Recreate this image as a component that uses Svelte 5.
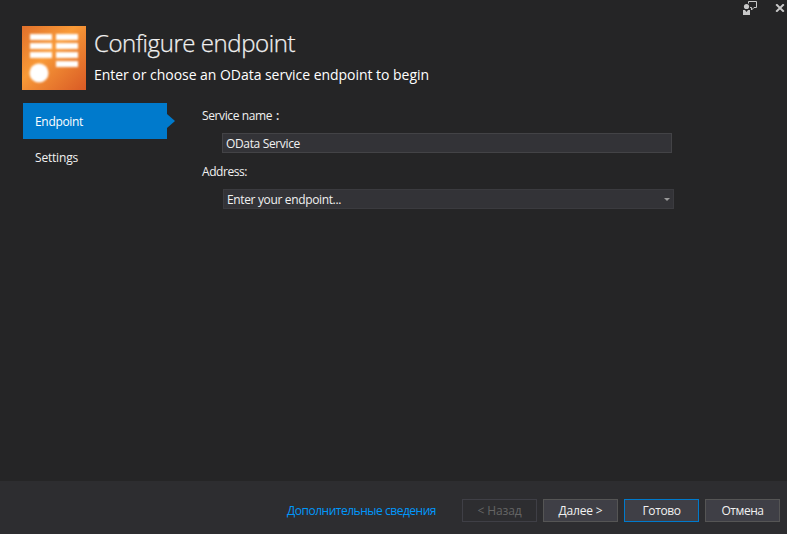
<script>
  const steps = [
    { label: 'Endpoint', w: 48 },
    { label: 'Settings', w: 43 }
  ];
  const buttons = [
    { label: '< Назад', w: 44, kind: 'disabled' },
    { label: 'Далее >', w: 44, kind: '' },
    { label: 'Готово', w: 38, kind: 'primary' },
    { label: 'Отмена', w: 42, kind: '' }
  ];
  let selected = $state(0);

  // Spreads the glyphs so that a label takes the given width.
  function fit(node, width) {
    const natural = node.getBoundingClientRect().width;
    node.style.letterSpacing = `${(width - natural) / node.textContent.length}px`;
  }
</script>

<div class="dialog">
  <div class="titlebar">
    <svg class="feedback" width="16" height="16" viewBox="0 0 16 16">
      <circle cx="4.500" cy="6.500" r="2.600" fill="#c8c8c8" />
      <path d="M1 10h2l1.500 2L6 10h2v5H1z" fill="#c8c8c8" />
      <path d="M6.500 3.500v-2h8v6h-2.500l-2.500 2.500v-2.500h-1.500" fill="none" stroke="#c8c8c8" />
    </svg>
    <svg class="close" width="10" height="8" viewBox="0 0 10 8">
      <path d="M1.200.3l7.600 7.400M8.800.3L1.200 7.700" stroke="#c8c8c8" stroke-width="2" />
    </svg>
  </div>

  <header>
    <svg class="logo" width="64" height="64" viewBox="0 0 64 64">
      <defs>
        <linearGradient id="orange" x1="0" y1="0" x2="1" y2="1">
          <stop offset="0" stop-color="#e0702b" />
          <stop offset=".42" stop-color="#f99a37" />
          <stop offset=".55" stop-color="#f08a33" />
          <stop offset="1" stop-color="#d95a25" />
        </linearGradient>
        <filter id="soft"><feGaussianBlur stdDeviation=".8" /></filter>
      </defs>
      <rect width="64" height="64" fill="url(#orange)" />
      <g fill="#fff" filter="url(#soft)">
        {#each [8, 17, 26] as y}
          <rect x="8" {y} width="22" height="6" />
        {/each}
        {#each [8, 17, 26, 35] as y}
          <rect x="34" {y} width="22" height="6" />
        {/each}
        <circle cx="17" cy="47" r="9.500" />
      </g>
    </svg>
    <div class="heading">
      <h1><span use:fit={201}>Configure endpoint</span></h1>
      <p><span use:fit={335}>Enter or choose an OData service endpoint to begin</span></p>
    </div>
  </header>

  <main>
    <nav>
      {#each steps as step, i}
        <button class="step" class:active={selected === i} onclick={() => (selected = i)}>
          <span use:fit={step.w}>{step.label}</span>
        </button>
      {/each}
    </nav>
    <section>
      <div class="label"><span use:fit={70}>Service name</span><b>:</b></div>
      <div class="field"><span use:fit={74}>OData Service</span></div>
      <div class="label second"><span use:fit={45}>Address:</span></div>
      <div class="field combo">
        <span use:fit={114}>Enter your endpoint...</span>
        <svg width="6" height="3" viewBox="0 0 6 3"><path d="M0 0h6L3 3z" fill="#999" /></svg>
      </div>
    </section>
  </main>

  <footer>
    <a href="#info"><span use:fit={149}>Дополнительные сведения</span></a>
    {#each buttons as b}
      <button class="btn {b.kind}" disabled={b.kind === 'disabled'}><span use:fit={b.w}>{b.label}</span></button>
    {/each}
  </footer>
</div>

<style>
  .dialog {
    width: 787px;
    height: 534px;
    display: flex;
    flex-direction: column;
    background: #252526;
    color: #f1f1f1;
    font: 12px/16px 'Open Sans', 'Noto Sans', sans-serif;
    overflow: hidden;
    white-space: nowrap;
  }
  svg { display: block; flex: none; }
  span { display: inline-block; }
  .titlebar {
    height: 26px;
    flex: none;
    display: flex;
    justify-content: flex-end;
    align-items: flex-start;
    padding-right: 2px;
    box-sizing: border-box;
  }
  .close { margin: 4px 0 0 17px; }
  header { display: flex; height: 77px; flex: none; padding-left: 22px; }
  .heading { padding-left: 8px; }
  h1 {
    margin: 0;
    font-size: 24px;
    line-height: 34px;
    font-weight: 300;
    -webkit-text-stroke: 0.25px #f1f1f1;
  }
  p { margin: 5px 0 0; font-size: 14px; line-height: 20px; color: #fff; }
  main { display: flex; flex: 1; }
  nav { width: 144px; margin-left: 23px; }
  button { font: inherit; color: inherit; }
  .step {
    position: relative;
    display: flex;
    align-items: center;
    width: 144px;
    height: 36px;
    padding: 1px 0 0 12px;
    border: 0;
    background: none;
  }
  .active { background: #007acc; color: #fff; }
  .active::after {
    content: '';
    position: absolute;
    left: 144px;
    top: 11px;
    border: solid transparent;
    border-width: 7px 0 7px 8px;
    border-left-color: #007acc;
  }
  section { margin-left: 35px; padding-top: 5px; }
  .label { height: 16px; }
  .label b { font-weight: 600; margin-left: 4px; }
  .second { margin-top: 11px; }
  .field {
    display: flex;
    align-items: center;
    box-sizing: border-box;
    width: 450px;
    height: 20px;
    margin: 9px 0 0 20px;
    padding: 1px 3px 0;
    background: #333337;
    border: 1px solid #434346;
  }
  .combo {
    width: 451px;
    margin: 9px 0 0 21px;
    justify-content: space-between;
    border-color: #3b3b3f;
  }
  footer {
    display: flex;
    flex: none;
    align-items: flex-start;
    justify-content: flex-end;
    gap: 6px;
    height: 53px;
    box-sizing: border-box;
    padding: 18px 7px 0 0;
    background: #2d2d30;
  }
  a { color: #0097fb; text-decoration: none; margin-right: 20px; line-height: 24px; }
  .btn {
    width: 75px;
    height: 23px;
    box-sizing: border-box;
    padding: 1px 0 0;
    line-height: 20px;
    background: #3f3f46;
    border: 1px solid #555;
  }
  .primary { border-color: #007acc; }
  .disabled { background: #2d2d30; border-color: #3f3f46; color: #656565; }
</style>
